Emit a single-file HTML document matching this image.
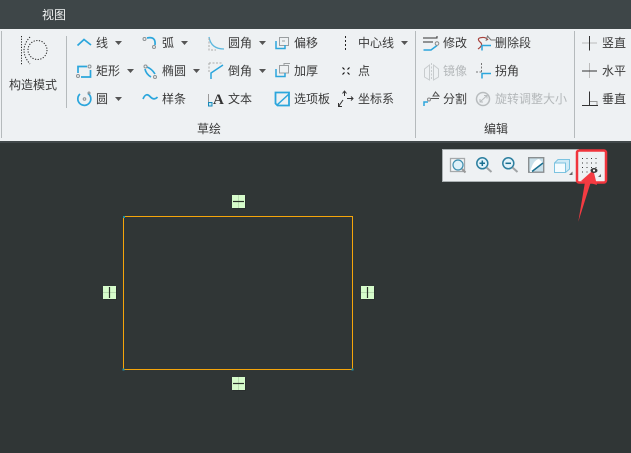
<!DOCTYPE html>
<html><head><meta charset="utf-8">
<style>
html,body{margin:0;padding:0;width:631px;height:453px;overflow:hidden;background:#303636}
body{position:relative;font-family:"Liberation Sans","Noto Sans CJK SC",sans-serif;font-size:12px;color:#3a3a3a}
.t{position:absolute;line-height:16px;white-space:nowrap;font-size:12px}
.g{color:#b4b8ba}
svg{position:absolute;left:0;top:0}
</style></head><body>
<div style="position:absolute;left:0;top:0;width:631px;height:29px;background:#3e4648"></div>
<div style="position:absolute;left:0;top:29px;width:631px;height:112px;background:#eef1f3"></div>
<div style="position:absolute;left:0;top:141px;width:631px;height:2px;background:#41484a"></div>
<div class="t" style="left:42px;top:7px;color:#f2f4f4">视图</div>
<svg width="631" height="453" viewBox="0 0 631 453" fill="none">
<!-- separators -->
<path d="M1.5 31V138M66.500 36V108M415.500 31V138M574.500 31V138" stroke="#b5babc"/>
<!-- construct mode -->
<g stroke="#222" stroke-dasharray="1.200 1.500">
<path d="M21.500 36V65"/><path d="M30 37Q18 50 30 64"/><circle cx="37.500" cy="50" r="9.500"/>
</g>
<!-- blue strokes, sketch column 1-2 -->
<g stroke="#2ba6dc" stroke-width="1.700">
<path d="M77.500 45.500L84 39.500L91 45"/>
<path d="M78 73V66.500H87M90.500 70V77H81"/>
<path d="M88 93.500A6.500 6.500 0 1 1 80 94"/>
<path d="M147 38Q156 36 155 45"/>
<path d="M147 67Q152 69 155 74M145 69Q146 74 151 77"/>
<path d="M143 99Q146 92 150 96.500T157.500 97"/>
</g>
<g stroke="#8d9294">
<circle cx="144.500" cy="39" r="1.500"/><circle cx="154" cy="47" r="1.500"/>
<circle cx="145.500" cy="66.500" r="1.500"/><circle cx="155" cy="77" r="1.500"/>
<circle cx="78" cy="76" r="1.500"/><circle cx="89.500" cy="66.500" r="1.500"/>
<circle cx="84.500" cy="99" r="1.300"/><circle cx="89" cy="93" r="1"/>
</g>
<!-- fillet / chamfer -->
<path d="M209 37Q211 49 224 49" stroke="#5cb8de" stroke-width="1.300"/>
<path d="M209 38V50H216M209 63H223M209 63V72" stroke="#aaa" stroke-dasharray="2 1.500"/>
<path d="M223 65L211 73V79" stroke="#2ba6dc" stroke-width="1.500"/>
<!-- offset / thicken -->
<path d="M279.500 37.500H288.500V45.500H279.500ZM282 41H285" stroke="#9a9ea0"/>
<path d="M276 41V48.500H285V45" stroke="#2ba6dc" stroke-width="1.500"/>
<path d="M279.500 65.500H288.500V73H279.500ZM284 65.500V63.500H290" stroke="#9a9ea0"/>
<path d="M276 69V76.500H285V73" stroke="#2ba6dc" stroke-width="1.500"/>
<!-- palette -->
<path d="M275.500 92.500H289V105.500H277.500L275.500 103.500Z" stroke="#2ba6dc" stroke-width="1.800"/>
<path d="M277 105L289 94" stroke="#2ba6dc" stroke-width="1.500"/>
<!-- text -->
<path d="M208.500 94V102" stroke="#999"/>
<text x="213" y="104" font-family="Liberation Serif" font-weight="bold" font-size="15" fill="#333">A</text>
<rect x="208.500" y="102.500" width="3.500" height="3.500" fill="#bfe6f5" stroke="#1788b8"/>
<!-- centerline, point, csys -->
<path d="M345.500 36V51" stroke="#222" stroke-dasharray="2 2"/>
<path d="M342.500 67.500L344.500 69.500M349.500 74.500L347.500 72.500M349.500 67.500L347.500 69.500M342.500 74.500L344.500 72.500" stroke="#111" stroke-width="1.200"/>
<path d="M344.500 91V96M342.500 93.500L344.500 91L346.500 93.500M347 98.500H353M351 96.500L353 98.500L351 100.500M343 100L338.500 106.500M338.500 103V106.500H342" stroke="#333"/>
<!-- edit -->
<path d="M423 38H437V36M423 42H433" stroke="#333"/>
<path d="M423.500 50H431L437 45.500" stroke="#2ba6dc" stroke-width="1.500"/>
<circle cx="437" cy="43.500" r="1.800" stroke="#888"/>
<path d="M478 49Q484 45 480 42Q476 38 482 37.500Q486 37 488 40" stroke="#a8433d" stroke-width="1.200"/>
<path d="M486 41L487.500 36L491 40H496" stroke="#777"/>
<path d="M482 50.500V45.500H491" stroke="#2ba6dc" stroke-width="1.500"/>
<path d="M429.500 65L424.500 69V77L429.500 80ZM433.500 65L438.500 69V77L433.500 80Z" stroke="#c8ccce"/>
<path d="M431.500 63V80" stroke="#c8ccce" stroke-dasharray="2 1.500"/>
<path d="M476 72H482M481.500 63V72" stroke="#777" stroke-dasharray="2 1.500"/>
<path d="M482 78.500V73.500H491" stroke="#2ba6dc" stroke-width="1.500"/>
<path d="M424 106V102H428" stroke="#2ba6dc" stroke-width="1.500"/>
<path d="M430 98.500H439M433 96L435.500 92L439 96Z" stroke="#555"/><circle cx="429" cy="99.500" r="1.500" stroke="#888"/>
<circle cx="483" cy="99" r="6.500" stroke="#b8bcbe" stroke-width="1.500"/><path d="M480 102L487 95.500M484 95.500H487V98.500M480 99V102H483" stroke="#b8bcbe"/>
<!-- constraints ribbon -->
<path d="M582 43H597" stroke="#bbb"/><path d="M589.500 36V50.500" stroke="#333"/>
<path d="M589.500 63V78" stroke="#bbb"/><path d="M582 71H597" stroke="#333"/>
<path d="M582 105.500H598M589.500 91.500V105" stroke="#333"/><path d="M590 101.500H597V105" stroke="#999"/>
<!-- dropdown arrows -->
<g fill="#555">
<path d="M115 41H122L118.500 45Z"/><path d="M181 41H188L184.500 45Z"/><path d="M259 41H266L262.500 45Z"/><path d="M401 41H408L404.500 45Z"/>
<path d="M127 69H134L130.500 73Z"/><path d="M193 69H200L196.500 73Z"/><path d="M259 69H266L262.500 73Z"/>
<path d="M115 97H122L118.500 101Z"/>
</g>
<!-- view toolbar -->
<rect x="442.500" y="149.500" width="136" height="32" fill="#eef1f3" stroke="#aab0b2"/>
<rect x="450.500" y="158.500" width="14" height="13" fill="#f6f8f9" stroke="#a5a9ab" stroke-width="1.300"/>
<circle cx="458" cy="165" r="5" fill="#dff1f9" stroke="#3d8fb0" stroke-width="1.200"/><path d="M462 169L465.500 172.500" stroke="#999" stroke-width="2"/>
<circle cx="482.300" cy="163.300" r="5.500" fill="#e3f3fa" stroke="#2d7f9f" stroke-width="1.500"/><path d="M479.500 163.300H485M482.300 160.500V166" stroke="#1a6f90" stroke-width="1.500"/><path d="M486.500 167.500L491.500 172" stroke="#a0a4a6" stroke-width="2"/>
<circle cx="508.300" cy="163.300" r="5.500" fill="#e3f3fa" stroke="#2d7f9f" stroke-width="1.500"/><path d="M505.500 163.300H511" stroke="#1a6f90" stroke-width="1.500"/><path d="M512.500 167.500L517.500 172" stroke="#a0a4a6" stroke-width="2"/>
<rect x="528.700" y="157.700" width="15" height="14.500" fill="#c9e0ea" stroke="#8a8f91" stroke-width="1.400"/><path d="M530 172Q533 160 539 159L543 163L532 172Z" fill="#fff"/><path d="M532 171.500L543 163" stroke="#1a6f90" stroke-width="1.500"/>
<path d="M554.500 163L558 159.500H569.500V169L565.500 172.500H554.500Z" fill="#cfeaf6" stroke="#7cc3e0"/><rect x="554.500" y="163" width="11" height="9.500" fill="#f4fbfe" stroke="#7cc3e0"/>
<path d="M572.500 175H569L572.500 171.500Z" fill="#666"/>
<!-- grid button -->
<rect x="577" y="150.500" width="29" height="32" rx="2" fill="#eef1f3" stroke="#f0353d" stroke-width="2.500"/>
<g fill="#333">
<rect x="582" y="158" width="1" height="1"/><rect x="586.500" y="158" width="1" height="1"/><rect x="591" y="158" width="1" height="1"/><rect x="595.500" y="158" width="1" height="1"/>
<rect x="582" y="162.500" width="1" height="1"/><rect x="586.500" y="162.500" width="1" height="1"/><rect x="591" y="162.500" width="1" height="1"/><rect x="595.500" y="162.500" width="1" height="1"/>
<rect x="582" y="167" width="1" height="1"/><rect x="586.500" y="167" width="1" height="1"/><rect x="591" y="167" width="1" height="1"/><rect x="595.500" y="167" width="1" height="1"/>
<rect x="582" y="171.500" width="1" height="1"/><rect x="586.500" y="171.500" width="1" height="1"/>
</g>
<path d="M601 177H598L601 174Z" fill="#666"/>
<!-- red arrow -->
<path d="M578.300 221.700L585 182L581 181L593.300 170L597 185L590.500 183Z" fill="#f43b42"/>
<ellipse cx="594" cy="170.500" rx="3.500" ry="2.500" fill="#3a3a3a"/><circle cx="594" cy="170.500" r="1.100" fill="#fff"/>
<!-- sketch rectangle -->
<rect x="123.500" y="216.500" width="229" height="153" stroke="#f5a50a"/>
<rect x="123" y="216" width="2" height="2" fill="#1b8fa8"/>
<rect x="122.500" y="368.500" width="2" height="2" fill="#1b8fa8"/>
<rect x="351.500" y="368.500" width="2" height="2" fill="#1b8fa8"/>
<!-- constraints -->
<rect x="233" y="196" width="13" height="13" fill="#1c2020" opacity=".35"/>
<rect x="233" y="378" width="13" height="13" fill="#1c2020" opacity=".35"/>
<rect x="104" y="287" width="13" height="13" fill="#1c2020" opacity=".35"/>
<rect x="362" y="287" width="13" height="13" fill="#1c2020" opacity=".35"/>
<rect x="232" y="195" width="13" height="13" fill="#d6fccb"/><path d="M238.500 195V208" stroke="#b9dcb0"/><path d="M233 201.500H244" stroke="#2c332c" stroke-width="1.200"/>
<rect x="232" y="377" width="13" height="13" fill="#d6fccb"/><path d="M238.500 377V390" stroke="#b9dcb0"/><path d="M233 383.500H244" stroke="#2c332c" stroke-width="1.200"/>
<rect x="103" y="286" width="13" height="13" fill="#d6fccb"/><path d="M103 292.500H116" stroke="#b9dcb0"/><path d="M109.500 287V298" stroke="#2c332c" stroke-width="1.200"/>
<rect x="361" y="286" width="13" height="13" fill="#d6fccb"/><path d="M361 292.500H374" stroke="#b9dcb0"/><path d="M367.500 287V298" stroke="#2c332c" stroke-width="1.200"/>
</svg>
<div class="t" style="left:9px;top:77px">构造模式</div>
<div class="t" style="left:96px;top:35px">线</div>
<div class="t" style="left:96px;top:63px">矩形</div>
<div class="t" style="left:96px;top:91px">圆</div>
<div class="t" style="left:162px;top:35px">弧</div>
<div class="t" style="left:162px;top:63px">椭圆</div>
<div class="t" style="left:162px;top:91px">样条</div>
<div class="t" style="left:228px;top:35px">圆角</div>
<div class="t" style="left:228px;top:63px">倒角</div>
<div class="t" style="left:228px;top:91px">文本</div>
<div class="t" style="left:294px;top:35px">偏移</div>
<div class="t" style="left:294px;top:63px">加厚</div>
<div class="t" style="left:294px;top:91px">选项板</div>
<div class="t" style="left:358px;top:35px">中心线</div>
<div class="t" style="left:358px;top:63px">点</div>
<div class="t" style="left:358px;top:91px">坐标系</div>
<div class="t" style="left:443px;top:35px">修改</div>
<div class="t g" style="left:443px;top:63px">镜像</div>
<div class="t" style="left:443px;top:91px">分割</div>
<div class="t" style="left:495px;top:35px">删除段</div>
<div class="t" style="left:495px;top:63px">拐角</div>
<div class="t g" style="left:495px;top:91px">旋转调整大小</div>
<div class="t" style="left:602px;top:35px">竖直</div>
<div class="t" style="left:602px;top:63px">水平</div>
<div class="t" style="left:602px;top:91px">垂直</div>
<div class="t" style="left:197px;top:121px">草绘</div>
<div class="t" style="left:484px;top:121px">编辑</div>
</body></html>
